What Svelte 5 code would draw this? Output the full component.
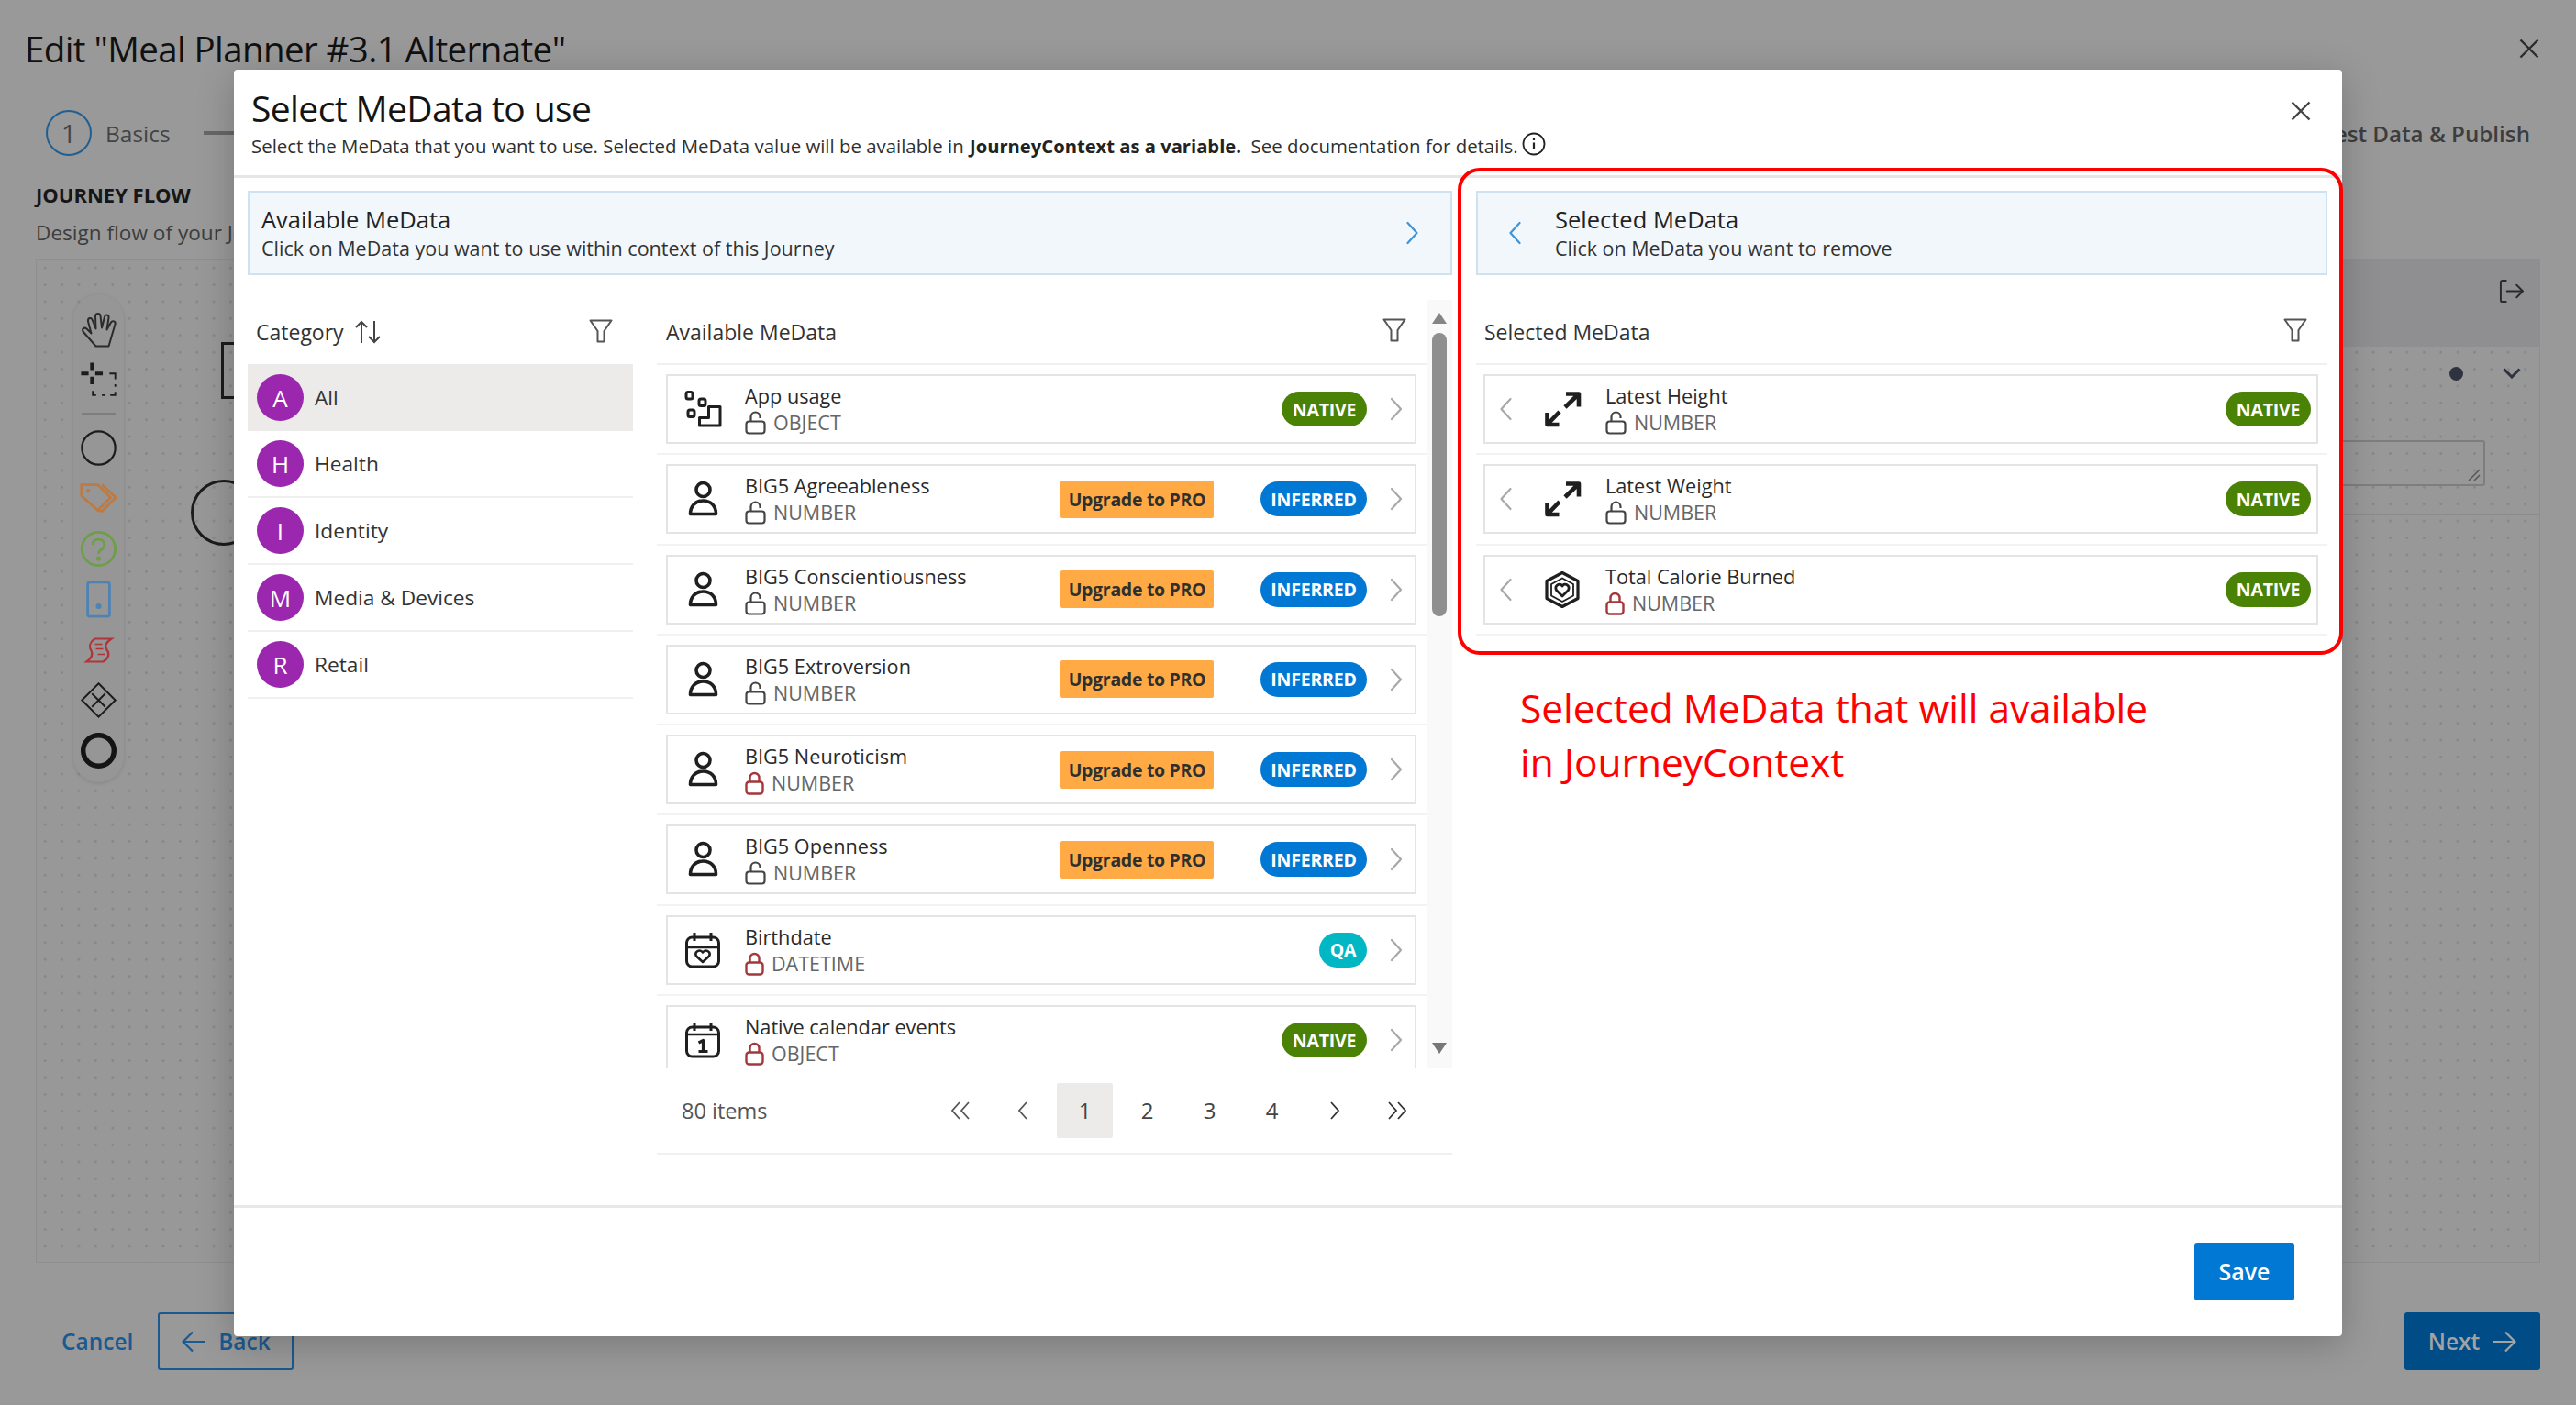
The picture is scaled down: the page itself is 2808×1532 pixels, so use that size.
<script>
  const categories = [
    { letter: 'A', name: 'All', active: true },
    { letter: 'H', name: 'Health' },
    { letter: 'I', name: 'Identity' },
    { letter: 'M', name: 'Media & Devices' },
    { letter: 'R', name: 'Retail' }
  ];

  const available = [
    { icon: 'app', name: 'App usage', type: 'OBJECT', badge: 'NATIVE' },
    { icon: 'person', name: 'BIG5 Agreeableness', type: 'NUMBER', badge: 'INFERRED', pro: true },
    { icon: 'person', name: 'BIG5 Conscientiousness', type: 'NUMBER', badge: 'INFERRED', pro: true },
    { icon: 'person', name: 'BIG5 Extroversion', type: 'NUMBER', badge: 'INFERRED', pro: true },
    { icon: 'person', name: 'BIG5 Neuroticism', type: 'NUMBER', badge: 'INFERRED', pro: true, locked: true },
    { icon: 'person', name: 'BIG5 Openness', type: 'NUMBER', badge: 'INFERRED', pro: true },
    { icon: 'birthday', name: 'Birthdate', type: 'DATETIME', badge: 'QA', locked: true },
    { icon: 'calendar', name: 'Native calendar events', type: 'OBJECT', badge: 'NATIVE', locked: true }
  ];

  const selected = [
    { icon: 'expand', name: 'Latest Height', type: 'NUMBER', badge: 'NATIVE' },
    { icon: 'expand', name: 'Latest Weight', type: 'NUMBER', badge: 'NATIVE' },
    { icon: 'hexheart', name: 'Total Calorie Burned', type: 'NUMBER', badge: 'NATIVE', locked: true }
  ];

  const pages = ['1', '2', '3', '4'];
</script>

{#snippet chevron(dir, cls)}
  <svg class={cls} viewBox="0 0 14 26" fill="none" stroke="currentColor" stroke-width="2.2" stroke-linecap="round" stroke-linejoin="round">
    <path d={dir === 'right' ? 'M2 2 L12 13 L2 24' : 'M12 2 L2 13 L12 24'} />
  </svg>
{/snippet}

{#snippet filter()}
  <svg class="filter" viewBox="0 0 26 26" fill="none" stroke="#555" stroke-width="2" stroke-linejoin="round">
    <path d="M1.5 1.5 H24.5 L16.5 13 V24.5 H9.5 V13 Z" />
  </svg>
{/snippet}

{#snippet lock(locked)}
  {#if locked}
    <svg class="lock closed" viewBox="0 0 21 26" fill="none" stroke="#a4373a" stroke-width="2.4">
      <rect x="1.5" y="11.5" width="18" height="13" rx="3" />
      <path d="M5.5 11.5 V7 a5 5 0 0 1 10 0 V11.5" />
    </svg>
  {:else}
    <svg class="lock" viewBox="0 0 23 26" fill="none" stroke="#444" stroke-width="2.2">
      <rect x="1.5" y="11.5" width="20" height="13" rx="3" />
      <path d="M6.5 11.5 V6.5 a5 5 0 0 1 10 0 V8" />
    </svg>
  {/if}
{/snippet}

{#snippet itemIcon(name)}
  <svg class="item-icon" viewBox="0 0 41 40" fill="none" stroke="#1f1f1f" stroke-width="3" stroke-linejoin="round">
    {#if name === 'app'}
      <rect x="2" y="1.5" width="7" height="7.5" rx="2" />
      <rect x="16" y="9" width="7" height="7.5" rx="2" />
      <rect x="4" y="21" width="7" height="7.5" rx="2" />
      <path d="M16.5 38 V29.5 H26.5 V17.5 H39 V38 Z" />
    {:else if name === 'person'}
      <circle cx="20.5" cy="10" r="7.5" stroke-width="3.6" />
      <path d="M6.5 36.5 H34.5 C34.5 28 29 22 20.5 22 C12 22 6.5 28 6.5 36.5 Z" stroke-width="3.6" />
    {:else if name === 'birthday' || name === 'calendar'}
      <rect x="2.5" y="6" width="35" height="32" rx="6" stroke-width="3" />
      <path d="M11 1 V10 M29 1 V10" stroke-width="3" />
      {#if name === 'birthday'}
        <path d="M2.5 17 H37.5" stroke-width="2.6" />
        <path d="M20 33 L13 26.5 C10.5 21.5 17 18.5 20 22.5 C23 18.5 29.5 21.5 27 26.5 Z" stroke-width="2.6" />
      {:else}
        <path d="M2.5 14 H37.5" stroke-width="2.6" />
        <path d="M15.5 23 L20.5 20.5 V32 M15.5 32.5 H25.5" stroke-width="3.2" />
      {/if}
    {:else if name === 'expand'}
      <path d="M23 3.5 H37 V17.5 M36.5 4 L22 18" stroke-width="4.6" />
      <path d="M2.5 24 V37 H15.5 M3 36.5 L16 23" stroke-width="4.6" />
    {:else if name === 'hexheart'}
      <path d="M19 1.5 L36 10.5 V29.5 L19 38.5 L2 29.5 V10.5 Z" stroke-width="3.2" />
      <path d="M19 7.5 L31 14 V26.5 L19 33 L7 26.5 V14 Z" stroke-width="1.8" />
      <path d="M19 27 L12.5 20.5 C10 15 16.5 12 19 16 C21.5 12 28 15 25.5 20.5 Z" stroke-width="2.8" />
    {/if}
  </svg>
{/snippet}

{#snippet badge(text)}
  <span class="badge {text.toLowerCase()}">{text}</span>
{/snippet}

<div class="page">
  <header class="top">
    <h1>Edit "Meal Planner #3.1 Alternate"</h1>
    <svg class="x" viewBox="0 0 22 22"><path d="M1.5 1.5 L20.5 20.5 M20.5 1.5 L1.5 20.5" /></svg>
  </header>

  <div class="stepper">
    <span class="step-num">1</span>
    <span class="step-label">Basics</span>
    <span class="step-line"></span>
    <span class="step-last">Test Data &amp; Publish</span>
  </div>

  <section class="intro">
    <h2>JOURNEY FLOW</h2>
    <p>Design flow of your Journey</p>
  </section>

  <div class="canvas">
    <div class="toolbar">
      <svg viewBox="0 0 40 40" fill="none" stroke="#2b2b2b" stroke-width="2" stroke-linecap="round" stroke-linejoin="round">
        <path d="M17 38 L3 22 C1.5 19 4.5 17 7 19 L12 24 L8.5 11 C8 7 12 6.5 13 9 L17 19 L16.5 5 C17 1.5 21.5 1.5 22 5 L23.5 18 L26.5 6 C27.5 3 31.5 3.5 31 7 L29 20 L33.5 12 C35 9.5 39 11 38 14 L31 38 Z" />
      </svg>
      <svg viewBox="0 0 44 44" fill="none" stroke="#1c1c1c">
        <path d="M14 1 V10 M14 18 V27 M1 14 H10 M18 14 H27" stroke-width="4.2" />
        <path d="M35 14 H42 V21 M42 27 V30 M42 36 V40 H36 M30 40 H26 M19 40 H15 V35" stroke-width="2" />
      </svg>
      <span class="tool-sep"></span>
      <svg viewBox="0 0 44 44" fill="none" stroke="#1c1c1c" stroke-width="2.4"><circle cx="22" cy="22" r="20" /></svg>
      <svg viewBox="0 0 44 36" fill="none" stroke="#bd7a42" stroke-width="3" stroke-linejoin="round">
        <path d="M2 2 H21 L36 17 L21 32 L2 15 Z" />
        <path d="M26 2 L42 17 L26 33 L21 32" />
        <circle cx="10" cy="9" r="2.4" fill="#bd7a42" stroke="none" />
      </svg>
      <svg viewBox="0 0 44 44" fill="none" stroke="#6f9e48" stroke-width="3">
        <circle cx="22" cy="22" r="20" />
        <path d="M15 17 C15 8 29 9 29 17 C29 23 22 22 22 28" stroke-width="3.2" />
        <circle cx="22" cy="33.5" r="2.8" fill="#6f9e48" stroke="none" />
      </svg>
      <svg viewBox="0 0 28 42" fill="none" stroke="#4f83b5" stroke-width="3">
        <rect x="1.5" y="1.5" width="25" height="39" rx="2.5" />
        <circle cx="14" cy="29" r="3.2" fill="#4f83b5" stroke="none" />
      </svg>
      <svg viewBox="-6 -6 40 40" fill="none" stroke="#b03538" stroke-width="2.2">
        <path d="M10 2 H28 C22 6 20 10 23 14 C27 19 24 24 19 27 H1 C5 24 9 20 6 15 C3 10 5 5 10 2 Z" />
        <path d="M10 8 H18 M11 13 H19 M13 19 H21" stroke-width="1.4" />
      </svg>
      <svg viewBox="0 0 44 44" fill="none" stroke="#1c1c1c" stroke-width="2.2">
        <path d="M22 2 L42 22 L22 42 L2 22 Z" />
        <path d="M14 14 L30 30 M30 14 L14 30" />
      </svg>
      <svg viewBox="0 0 44 44" fill="none" stroke="#141414" stroke-width="6"><circle cx="22" cy="22" r="18.5" /></svg>
    </div>

    <span class="node-rect"></span>
    <span class="node-circle"></span>

    <aside class="props">
      <div class="props-head">
        <svg viewBox="0 0 28 28" fill="none" stroke="#2a2a2a" stroke-width="2" stroke-linecap="round" stroke-linejoin="round">
          <path d="M8 2 H4 C2.5 2 2 3 2 4 V24 C2 25 2.5 26 4 26 H8 M9 14 H27 M20 7 L27 14 L20 21" />
        </svg>
      </div>
      <div class="props-row">
        <span class="dot"></span>
        <svg viewBox="0 0 20 12" fill="none" stroke="#2f3340" stroke-width="3"><path d="M1.5 1.5 L10 10 L18.5 1.5" /></svg>
      </div>
      <div class="props-text">
        <span class="textarea">
          <svg viewBox="0 0 14 14" fill="none" stroke="#555" stroke-width="1.5"><path d="M1 13 L13 1 M7 13 L13 7" /></svg>
        </span>
      </div>
    </aside>
  </div>

  <footer class="actions">
    <span class="cancel">Cancel</span>
    <button class="back">
      <svg viewBox="0 0 26 24" fill="none" stroke="#1a5a90" stroke-width="2.2"><path d="M25 12 H2 M12 1.5 L1.5 12 L12 22.5" /></svg>
      Back
    </button>
    <button class="next">
      Next
      <svg viewBox="0 0 26 24" fill="none" stroke="#a3a3a3" stroke-width="2.2"><path d="M1 12 H24 M14 1.5 L24.5 12 L14 22.5" /></svg>
    </button>
  </footer>

  <div class="modal">
    <div class="modal-head">
      <div>
        <h3>Select MeData to use</h3>
        <p class="lead">
          Select the MeData that you want to use. Selected MeData value will be available in <b>JourneyContext as a variable.</b>&nbsp; See documentation for details.
          <svg class="info" viewBox="0 0 26 26" fill="none" stroke="#222" stroke-width="1.8">
            <circle cx="13" cy="13" r="11.5" />
            <path d="M13 11.5 V19 M13 7 V9" stroke-width="2.2" />
          </svg>
        </p>
      </div>
      <svg class="x dark" viewBox="0 0 22 22"><path d="M1.5 1.5 L20.5 20.5 M20.5 1.5 L1.5 20.5" /></svg>
    </div>

    <div class="modal-body">
      <section class="side left">
        <div class="banner">
          <div>
            <strong>Available MeData</strong>
            <span>Click on MeData you want to use within context of this Journey</span>
          </div>
          {@render chevron('right', 'banner-chev')}
        </div>

        <div class="columns">
          <div class="category">
            <div class="col-head">
              <span class="col-title">Category</span>
              <svg class="sort" viewBox="0 0 28 26" fill="none" stroke="#444" stroke-width="2"><path d="M7 25 V2 M1 8 L7 2 L13 8 M21 1 V24 M15 18 L21 24 L27 18" /></svg>
              {@render filter()}
            </div>
            {#each categories as c}
              <div class="cat-row" class:active={c.active}>
                <span class="avatar">{c.letter}</span>
                <span>{c.name}</span>
              </div>
            {/each}
          </div>

          <div class="avail">
            <div class="avail-scroll">
              <div class="col-main">
                <div class="col-head list-head">
                  <span class="col-title">Available MeData</span>
                  {@render filter()}
                </div>
                <div class="clip">
                  {#each available as item}
                    <div class="row">
                      <div class="card">
                        {@render itemIcon(item.icon)}
                        <div class="meta">
                          <span class="name">{item.name}</span>
                          <span class="type">{@render lock(item.locked)}{item.type}</span>
                        </div>
                        {#if item.pro}<span class="pro">Upgrade to PRO</span>{/if}
                        {@render badge(item.badge)}
                        {@render chevron('right', 'card-chev')}
                      </div>
                    </div>
                  {/each}
                </div>
              </div>
              <div class="scrollbar">
                <span class="arrow up"></span>
                <span class="thumb"></span>
                <span class="arrow down"></span>
              </div>
            </div>
            <div class="pager">
              <span class="count">80 items</span>
              <div class="pages">
                <span class="pg"><svg viewBox="0 0 22 22" fill="none" stroke="#555" stroke-width="1.8"><path d="M10 2 L2 11 L10 20 M20 2 L12 11 L20 20" /></svg></span>
                <span class="pg"><svg viewBox="0 0 12 22" fill="none" stroke="#555" stroke-width="1.8"><path d="M10 2 L2 11 L10 20" /></svg></span>
                {#each pages as p, i}
                  <span class="pg" class:current={i === 0}>{p}</span>
                {/each}
                <span class="pg"><svg viewBox="0 0 12 22" fill="none" stroke="#333" stroke-width="1.8"><path d="M2 2 L10 11 L2 20" /></svg></span>
                <span class="pg"><svg viewBox="0 0 22 22" fill="none" stroke="#333" stroke-width="1.8"><path d="M2 2 L10 11 L2 20 M12 2 L20 11 L12 20" /></svg></span>
              </div>
            </div>
          </div>
        </div>
      </section>

      <section class="side right">
        <div class="banner sel">
          {@render chevron('left', 'banner-chev')}
          <div>
            <strong>Selected MeData</strong>
            <span>Click on MeData you want to remove</span>
          </div>
        </div>
        <div class="sel-col">
          <div class="col-head sel-head">
            <span class="col-title">Selected MeData</span>
            {@render filter()}
          </div>
          {#each selected as item}
            <div class="row sel-row">
              <div class="card">
                {@render chevron('left', 'card-chev')}
                {@render itemIcon(item.icon)}
                <div class="meta">
                  <span class="name">{item.name}</span>
                  <span class="type">{@render lock(item.locked)}{item.type}</span>
                </div>
                {@render badge(item.badge)}
              </div>
            </div>
          {/each}
        </div>
      </section>
    </div>

    <div class="modal-foot">
      <button class="save">Save</button>
    </div>
  </div>

  <div class="callout"></div>
  <div class="callout-text">Selected MeData that will available<br />in JourneyContext</div>
</div>

<style>
  :global(body) {
    margin: 0;
    font-family: "Open Sans", "Noto Sans", sans-serif;
  }

  .page {
    position: relative;
    width: 2808px;
    height: 1532px;
    overflow: hidden;
    background: #999;
    color: #111;
  }

  .top {
    display: flex;
    align-items: center;
    justify-content: space-between;
    height: 106px;
    padding: 0 40px 0 27px;
  }

  h1 {
    margin: 0;
    font-size: 38.5px;
    font-weight: 500;
    letter-spacing: -0.6px;
    color: #111;
  }

  .x {
    width: 22px;
    height: 22px;
    fill: none;
    stroke: #2b2b2b;
    stroke-width: 2.4;
  }

  .x.dark {
    stroke: #444;
  }

  .stepper {
    display: flex;
    align-items: center;
    height: 78px;
    padding: 0 50px;
    color: #444;
    font-size: 24.5px;
  }

  .step-num {
    display: flex;
    align-items: center;
    justify-content: center;
    box-sizing: border-box;
    width: 50px;
    height: 50px;
    border: 2px solid #1f5f92;
    border-radius: 50%;
    font-size: 28px;
  }

  .step-label {
    margin-left: 15px;
    font-weight: 500;
  }

  .step-line {
    width: 60px;
    height: 4px;
    margin-left: 36px;
    background: #666;
  }

  .step-last {
    margin-left: auto;
    font-size: 24.2px;
    font-weight: 600;
    color: #3d3d3d;
  }

  .intro {
    padding-left: 39px;
  }

  h2 {
    margin: 14px 0 0;
    font-size: 22px;
    line-height: 28px;
    font-weight: 700;
    color: #161616;
  }

  .intro p {
    margin: 12px 0 0;
    font-size: 22.6px;
    line-height: 32px;
    color: #3d3d3d;
  }

  .canvas {
    position: relative;
    display: flex;
    justify-content: flex-end;
    box-sizing: border-box;
    width: 2730px;
    height: 1095px;
    margin: 12px 0 0 39px;
    border: 1px solid #8f8f8f;
    background-color: #989898;
    background-image: radial-gradient(circle, #868686 1.2px, transparent 1.5px);
    background-size: 18.4px 18.4px;
  }

  .toolbar {
    position: absolute;
    left: 40px;
    top: 38px;
    display: flex;
    flex-direction: column;
    align-items: center;
    box-sizing: border-box;
    width: 55px;
    height: 532px;
    padding-top: 11px;
    border-radius: 28px;
    background: #969696;
    box-shadow: 0 1px 4px rgba(0, 0, 0, 0.12);
  }

  .toolbar svg {
    width: 41px;
    height: 40px;
    padding: 7.5px 0;
    flex: none;
  }

  .tool-sep {
    flex: none;
    width: 37px;
    height: 2px;
    margin: 8px 0 9px;
    background: #7d7d7d;
  }

  .node-rect {
    position: absolute;
    left: 201px;
    top: 90px;
    width: 60px;
    height: 56px;
    border: 3px solid #1c1c1c;
  }

  .node-circle {
    position: absolute;
    left: 168px;
    top: 240px;
    width: 66px;
    height: 66px;
    border: 3px solid #1c1c1c;
    border-radius: 50%;
  }

  .props {
    display: flex;
    flex-direction: column;
    width: 700px;
    border-left: 1px solid #8f8f8f;
  }

  .props-head {
    display: flex;
    align-items: flex-start;
    justify-content: flex-end;
    box-sizing: border-box;
    flex: none;
    height: 95px;
    padding: 21px 17px 0 0;
    background: #8f8f91;
  }

  .props-head svg {
    width: 27px;
    height: 27px;
  }

  .props-row {
    display: flex;
    align-items: center;
    justify-content: flex-end;
    gap: 43px;
    height: 58px;
    padding-right: 20px;
  }

  .props-row svg {
    width: 20px;
    height: 12px;
  }

  .dot {
    width: 15px;
    height: 15px;
    border-radius: 50%;
    background: #2f3340;
  }

  .props-text {
    padding: 44px 59px 30px 0;
    border-bottom: 2px solid #8b8b8b;
    display: flex;
    justify-content: flex-end;
  }

  .textarea {
    display: flex;
    align-items: flex-end;
    justify-content: flex-end;
    box-sizing: border-box;
    width: 400px;
    height: 50px;
    padding: 0 3px 3px 0;
    border: 2px solid #7e7e7e;
    border-radius: 3px;
  }

  .textarea svg {
    width: 14px;
    height: 14px;
  }

  .actions {
    display: flex;
    align-items: center;
    gap: 27px;
    height: 63px;
    margin-top: 54px;
    padding: 0 39px 0 67px;
    font-size: 24.5px;
    font-weight: 600;
    color: #1a5a90;
  }

  .actions button {
    display: flex;
    align-items: center;
    justify-content: center;
    gap: 14px;
    box-sizing: border-box;
    width: 148px;
    height: 63px;
    border-radius: 3px;
    font: inherit;
  }

  .actions svg {
    width: 26px;
    height: 24px;
  }

  .back {
    border: 2px solid #1a5a90;
    background: transparent;
    color: #1a5a90;
  }

  .next {
    margin-left: auto;
    border: 0;
    background: #004c87;
    color: #a3a3a3;
  }

  .modal {
    position: absolute;
    left: 255px;
    top: 76px;
    display: flex;
    flex-direction: column;
    width: 2298px;
    height: 1381px;
    border-radius: 4px;
    background: #fff;
    box-shadow: 0 8px 40px rgba(0, 0, 0, 0.22);
  }

  .modal-head {
    display: flex;
    align-items: flex-start;
    justify-content: space-between;
    box-sizing: border-box;
    flex: none;
    height: 118px;
    padding: 20px 34px 0 19px;
    border-bottom: 3px solid #e6e6e6;
  }

  .modal-head .x {
    margin-top: 14px;
  }

  h3 {
    margin: 0;
    font-size: 39px;
    line-height: 44px;
    font-weight: 500;
    letter-spacing: -0.6px;
    color: #141414;
  }

  .lead {
    display: flex;
    align-items: center;
    margin: 4px 0 0;
    font-size: 20.4px;
    line-height: 30px;
    color: #2f2f2f;
    white-space: pre-wrap;
  }

  .lead b {
    margin-left: 1px;
    font-size: 20.2px;
    font-weight: 700;
    color: #222;
  }

  .info {
    width: 26px;
    height: 26px;
    margin: -4px 0 0 -1px;
  }

  .modal-body {
    display: flex;
    flex: 1;
    gap: 26px;
    padding: 14px 16px 0 15px;
    border-bottom: 3px solid #e8e8e8;
  }

  .side.left {
    width: 1313px;
    flex: none;
  }

  .side.right {
    width: 928px;
    flex: none;
  }

  .banner {
    display: flex;
    align-items: center;
    justify-content: space-between;
    box-sizing: border-box;
    height: 92px;
    padding: 0 34px 0 13px;
    border: 2px solid #cfe2f0;
    background: #f2f7fc;
  }

  .banner.sel {
    justify-content: flex-start;
    gap: 36px;
    padding-left: 33px;
  }

  .banner strong,
  .banner span {
    display: block;
  }

  .banner strong {
    margin-top: 1px;
    font-size: 25.5px;
    line-height: 32px;
    font-weight: 500;
    color: #222;
  }

  .banner div span {
    font-size: 21.5px;
    line-height: 31px;
    color: #333;
  }

  .banner :global(.banner-chev) {
    width: 15px;
    height: 26px;
    color: #3f94d8;
  }

  .columns {
    display: flex;
    gap: 26px;
    margin-top: 27px;
  }

  .category {
    width: 420px;
    flex: none;
  }

  .col-head {
    display: flex;
    align-items: center;
    box-sizing: border-box;
    height: 70px;
    padding: 0 22px 0 9px;
  }

  .col-title {
    font-size: 23px;
    font-weight: 500;
    color: #333;
  }

  .sort {
    width: 28px;
    height: 26px;
    margin-left: 12px;
  }

  .filter {
    width: 26px;
    height: 26px;
    margin-left: auto;
    margin-top: -3px;
  }

  .cat-row {
    display: flex;
    align-items: center;
    gap: 12px;
    box-sizing: border-box;
    height: 73px;
    padding-left: 10px;
    border-bottom: 2px solid #f0f0f0;
    font-size: 22.7px;
    color: #333;
  }

  .cat-row.active {
    background: #edebe9;
    border-bottom: 0;
  }

  .avatar {
    display: flex;
    align-items: center;
    justify-content: center;
    width: 51px;
    height: 51px;
    border-radius: 50%;
    background: #9b27af;
    color: #fff;
    font-size: 26px;
  }

  .avail {
    flex: 1;
    min-width: 0;
  }

  .avail-scroll {
    display: flex;
  }

  .col-main {
    width: 839px;
    flex: none;
  }

  .list-head {
    padding: 0 22px 0 10px;
    border-bottom: 2px solid #f0f0f0;
    height: 71px;
  }

  .clip {
    height: 766px;
    overflow: hidden;
  }

  .row {
    box-sizing: border-box;
    height: 98.3px;
    padding: 10px 11px 0 10px;
    border-bottom: 2px solid #f3f3f3;
  }

  .card {
    display: flex;
    align-items: center;
    box-sizing: border-box;
    height: 76px;
    padding: 0 13px 0 18px;
    border: 2px solid #e4e4e4;
  }

  .card :global(.item-icon) {
    width: 41px;
    height: 40px;
    flex: none;
    margin-right: 25px;
  }

  .meta {
    display: flex;
    flex-direction: column;
    margin-right: auto;
  }

  .name {
    font-size: 21.7px;
    line-height: 30px;
    color: #2a2a2a;
  }

  .type {
    display: flex;
    align-items: center;
    gap: 8px;
    font-size: 21.5px;
    line-height: 28px;
    color: #666;
  }

  .type :global(.lock) {
    width: 23px;
    height: 26px;
  }

  .type :global(.lock.closed) {
    width: 21px;
  }

  .pro {
    display: flex;
    align-items: center;
    justify-content: center;
    box-sizing: border-box;
    width: 167px;
    height: 41px;
    margin-right: 51px;
    border-radius: 2px;
    background: #ffaa44;
    color: #2f2f2f;
    font-size: 19.5px;
    font-weight: 700;
    letter-spacing: -0.3px;
  }

  .badge {
    display: flex;
    align-items: center;
    justify-content: center;
    box-sizing: border-box;
    height: 38px;
    border-radius: 19px;
    color: #fff;
    font-size: 19.5px;
    font-weight: 700;
    letter-spacing: -0.2px;
  }

  .badge.native {
    width: 93px;
    background: #498205;
  }

  .badge.inferred {
    width: 116px;
    background: #0078d4;
  }

  .badge.qa {
    width: 52px;
    background: #00b7c3;
  }

  .card :global(.card-chev) {
    width: 14px;
    height: 26px;
    margin-left: 25px;
    color: #a8a8a8;
    flex: none;
  }

  .scrollbar {
    display: flex;
    flex-direction: column;
    align-items: center;
    width: 28px;
    background: #f9f9f9;
  }

  .thumb {
    width: 16px;
    height: 309px;
    margin-top: 10px;
    border-radius: 8px;
    background: #8f8f8f;
  }

  .arrow {
    width: 0;
    height: 0;
    border-left: 8px solid transparent;
    border-right: 8px solid transparent;
  }

  .arrow.up {
    margin-top: 14px;
    border-bottom: 12px solid #858585;
  }

  .arrow.down {
    margin-top: auto;
    margin-bottom: 15px;
    border-top: 12px solid #777;
  }

  .pager {
    display: flex;
    align-items: center;
    justify-content: space-between;
    box-sizing: border-box;
    height: 95px;
    padding: 0 30px 0 27px;
    border-bottom: 2px solid #f0f0f0;
  }

  .count {
    font-size: 23.5px;
    color: #555;
    white-space: nowrap;
  }

  .pages {
    display: flex;
    gap: 7px;
  }

  .pg {
    display: flex;
    align-items: center;
    justify-content: center;
    width: 61px;
    height: 60px;
    border-radius: 2px;
    font-size: 24px;
    color: #444;
  }

  .pg.current {
    background: #edebe9;
  }

  .pg svg {
    width: 22px;
    height: 22px;
  }

  .sel-col {
    margin-top: 27px;
  }

  .sel-head {
    padding: 0 22px 0 9px;
    border-bottom: 2px solid #f0f0f0;
    height: 71px;
  }

  .sel-row {
    padding: 10px 10px 0 8px;
  }

  .sel-row .card {
    padding: 0 6px 0 15px;
  }

  .sel-row .card :global(.card-chev) {
    margin: 0 35px 0 0;
    width: 15px;
  }

  .modal-foot {
    display: flex;
    align-items: center;
    justify-content: flex-end;
    flex: none;
    height: 140px;
    padding-right: 52px;
    box-sizing: border-box;
  }

  .save {
    width: 109px;
    height: 63px;
    margin-top: -2px;
    border: 0;
    border-radius: 3px;
    background: #0078d4;
    color: #fff;
    font: 600 25px "Open Sans", sans-serif;
  }

  .callout {
    position: absolute;
    left: 1589px;
    top: 183px;
    width: 965px;
    height: 531px;
    box-sizing: border-box;
    border: 4px solid #f00;
    border-radius: 24px;
    pointer-events: none;
  }

  .callout-text {
    position: absolute;
    left: 1657px;
    top: 742px;
    font-size: 42.4px;
    line-height: 59px;
    color: #f00;
  }
</style>
